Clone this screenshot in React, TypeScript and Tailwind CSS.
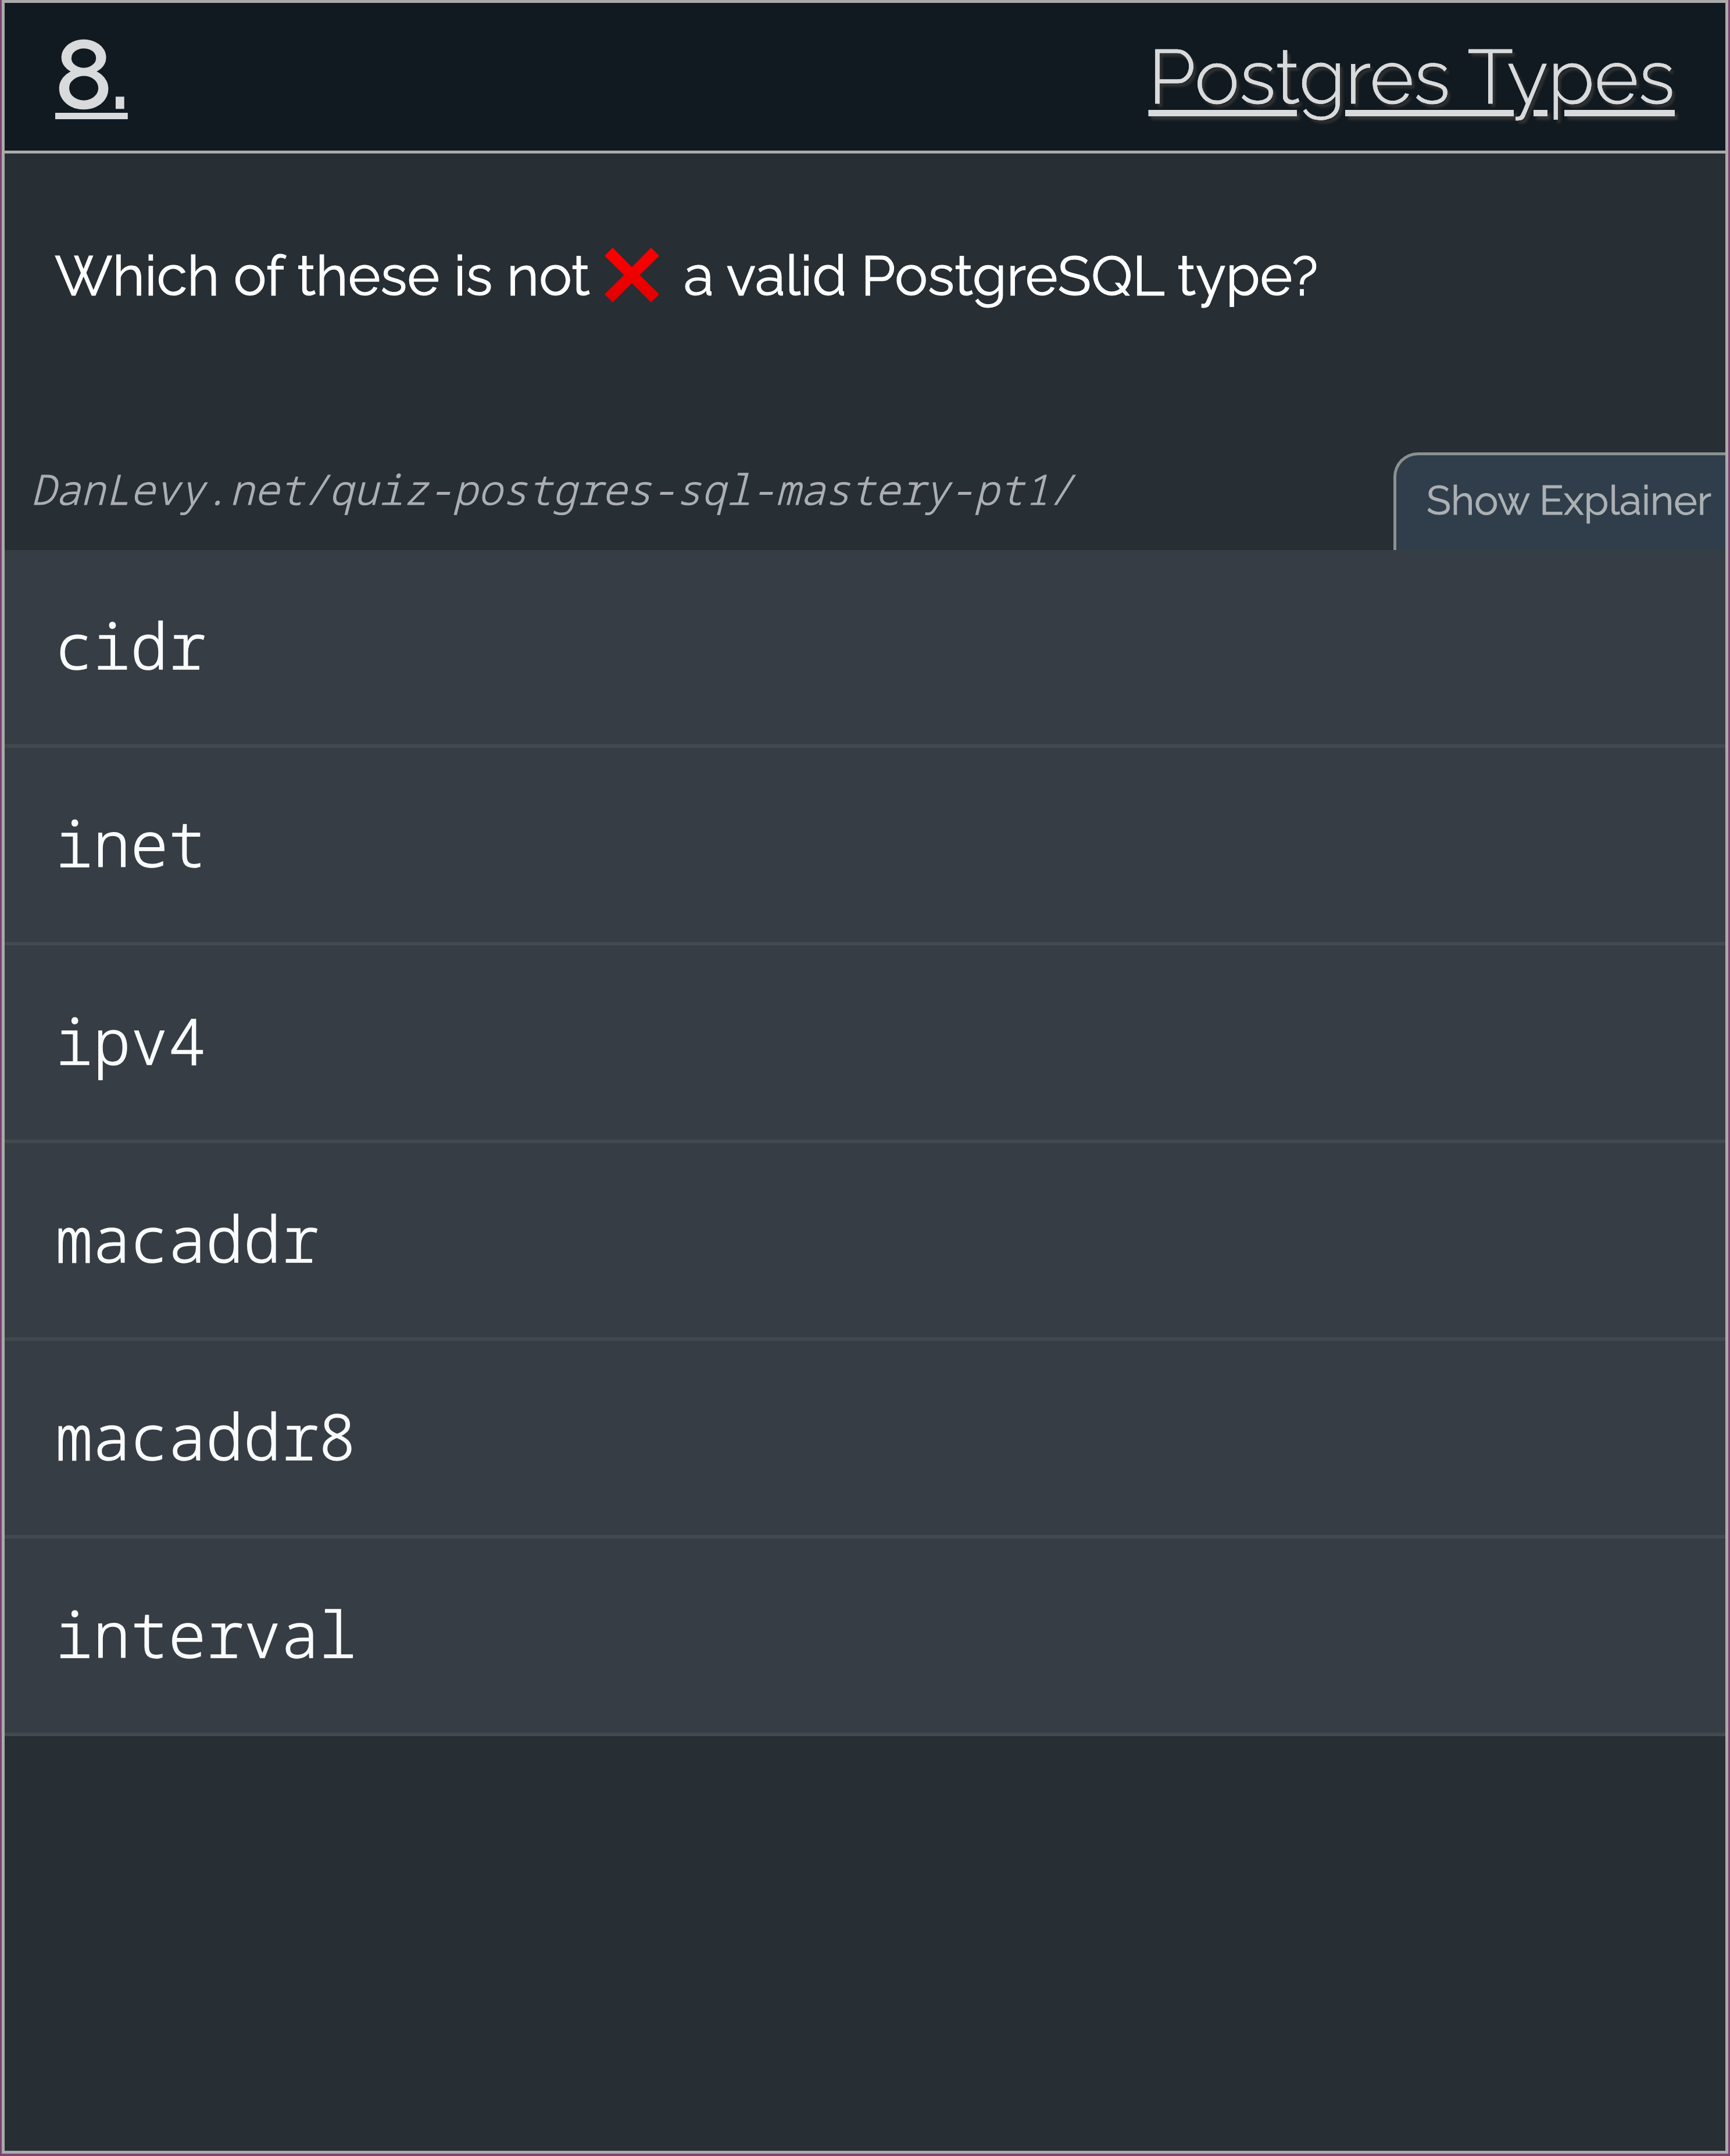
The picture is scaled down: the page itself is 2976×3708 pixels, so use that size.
const options = ["cidr", "inet", "ipv4", "macaddr", "macaddr8", "interval"];

function CrossMark() {
  return (
    <svg viewBox="0 0 94 94" className="mb-[4px] ml-[25px] h-[94px] w-[94px] shrink-0" aria-label="not">
      <defs>
        <linearGradient id="cross" x1="0" y1="0" x2="0" y2="1">
          <stop offset="0" stopColor="#ff0000" />
          <stop offset="1" stopColor="#e00000" />
        </linearGradient>
      </defs>
      <path
        d="M14 0 47 33.5 80 0 94 14 60.5 47 94 80 80 94 47 61 14 94 0 80 33.5 47 0 14Z"
        fill="url(#cross)"
      />
    </svg>
  );
}

function Header() {
  return (
    <header className="flex h-[259px] items-center justify-between border-b-[5px] border-[#a9abac] bg-[#111a20] pr-[87px] pl-[87px] text-[#d8dadc]">
      <span className="pb-[9px] text-[164px] leading-none font-medium tracking-[-3.2px] underline decoration-[11px] underline-offset-[8px] [-webkit-text-stroke:2.6px_#d8dadc] [text-decoration-skip-ink:none]">
        8.
      </span>
      <h1 className="text-[130.2px] leading-none font-light underline decoration-[11px] underline-offset-[11px] [-webkit-text-stroke:0.7px_#d8dadc] [text-shadow:5px_6px_4px_#333]">
        Postgres Types
      </h1>
    </header>
  );
}

function Question() {
  return (
    <section className="flex h-[682px] flex-col justify-between pt-[158px]">
      <div className="flex h-[106px] items-center pl-[86px] text-[95.2px] leading-none font-normal text-white [-webkit-text-stroke:1.1px_#fff]">
        <span className="whitespace-nowrap">Which of these is not</span>
        <CrossMark />
        <span className="ml-[42px] whitespace-nowrap">a valid PostgreSQL type?</span>
      </div>
      <div className="flex items-end justify-between">
        <span className="pb-[70px] pl-[45px] font-['Noto_Sans_Mono','Liberation_Mono',monospace] text-[71.2px] leading-none font-light text-[#abaeb3] italic [-webkit-text-stroke:1.1px_#abaeb3]">
          DanLevy.net/quiz-postgres-sql-mastery-pt1/
        </span>
        <button className="flex h-[168px] w-[571px] items-start rounded-tl-[42px] border-t-[5px] border-l-[5px] border-[#8b9090] bg-[#2f3e4a] pt-[43px] pl-[52px] text-[69.1px] leading-none font-normal whitespace-nowrap text-[#abb0b4] [-webkit-text-stroke:1px_#abb0b4]">
          Show Explainer
        </button>
      </div>
    </section>
  );
}

export default function App() {
  return (
    <div className="h-[3708px] w-[2976px] bg-[#7b4272] pr-[3px] pb-[4px] pl-[3px] font-['Raleway','Lato',sans-serif]">
      <main className="h-full border-[5px] border-[#aaaaaa] bg-[#272e34]">
        <Header />
        <Question />
        <ul>
          {options.map((option) => (
            <li
              key={option}
              className="h-[340px] border-b-[6px] border-[#42494f] bg-[#363d44] pt-[110px] pl-[87px] font-['Noto_Sans_Mono','Liberation_Mono',monospace] text-[108px] leading-none font-light text-[#fafbfc] [-webkit-text-stroke:1.5px_#fafbfc]"
            >
              {option}
            </li>
          ))}
        </ul>
      </main>
    </div>
  );
}
